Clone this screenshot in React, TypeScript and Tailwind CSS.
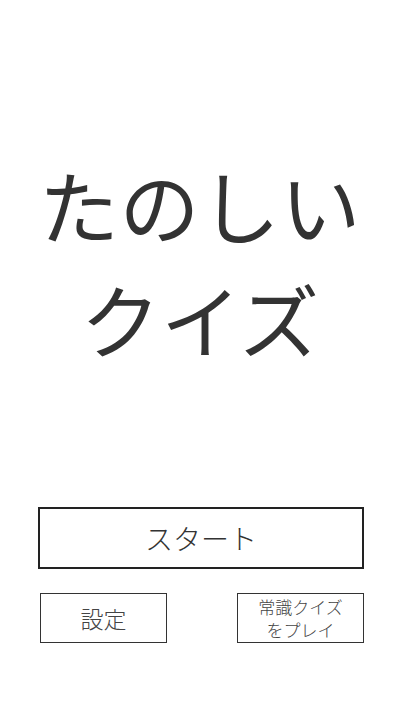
const jp = { fontFamily: '"Noto Sans CJK JP", "Noto Sans", sans-serif' };

function Title() {
  return (
    <h1
      className="text-center text-[80px] leading-[114px] font-normal text-[#333333] tracking-[0.5px]"
      style={jp}
    >
      たのしい
      <br />
      クイズ
    </h1>
  );
}

export default function App() {
  return (
    <div className="w-[400px] h-[711px] bg-white flex flex-col" style={jp}>
      <div className="pt-[146px]">
        <Title />
      </div>

      <div className="mt-[133px] pl-[38px] pr-[36px] flex flex-col">
        <button className="h-[62px] w-full border-2 border-[#222222] bg-white text-[28px] font-light text-[#333333]">
          スタート
        </button>

        <div className="mt-[24px] flex justify-between pl-[2px]">
          <button className="h-[50px] w-[127px] border-[1.5px] border-[#333333] bg-white text-[23px] font-light text-[#444444]">
            設定
          </button>
          <button className="h-[50px] w-[127px] border-[1.5px] border-[#333333] bg-white text-[17px] leading-[23px] font-light text-[#444444]">
            常識クイズ
            <br />
            をプレイ
          </button>
        </div>
      </div>
    </div>
  );
}
